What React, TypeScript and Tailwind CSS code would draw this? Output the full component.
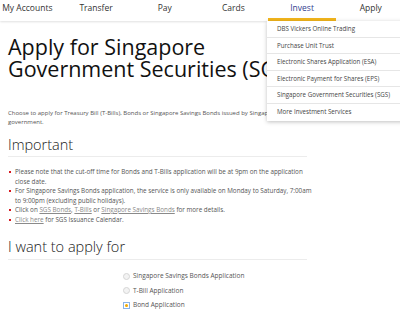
import React from "react";

const navItems = ["My Accounts", "Transfer", "Pay", "Cards", "Invest", "Apply"];

const investMenu = [
  "DBS Vickers Online Trading",
  "Purchase Unit Trust",
  "Electronic Shares Application (ESA)",
  "Electronic Payment for Shares (EPS)",
  "Singapore Government Securities (SGS)",
  "More Investment Services",
];

function Link({ children }: { children: React.ReactNode }) {
  return <span className="text-[#8a8a8a] underline">{children}</span>;
}

function Bullet({ children }: { children: React.ReactNode }) {
  return (
    <li className="relative pl-[7px]">
      <span className="absolute left-[1px] top-[4px] h-[2px] w-[2px] bg-[#d71920]" />
      {children}
    </li>
  );
}

export default function App() {
  return (
    <div
      className="relative h-[314px] w-[400px] overflow-hidden bg-white text-[#333]"
      style={{ fontFamily: '"Open Sans", "Liberation Sans", sans-serif' }}
    >
      {/* top nav */}
      <div className="relative z-10 h-[21px] bg-white shadow-[0_1px_2px_rgba(0,0,0,0.12)]">
        <div className="-ml-[7px] flex">
          {navItems.map((item) => (
            <div
              key={item}
              className={`h-[21px] w-[68.7px] shrink-0 border-b-[3px] pt-[2px] text-center text-[8.5px] leading-[11px] ${
                item === "Invest"
                  ? "border-[#f2b51c] text-[#33408f]"
                  : "border-transparent text-[#333]"
              }`}
            >
              {item}
            </div>
          ))}
        </div>
      </div>

      {/* invest dropdown */}
      <div className="absolute left-[267px] top-[21px] z-20 w-[150px] bg-white shadow-[0_1px_4px_rgba(0,0,0,0.25)]">
        {investMenu.map((m, i) => (
          <div
            key={m}
            className={`h-[16.6px] pl-[10px] text-[6.2px] leading-[16.6px] text-[#444] ${
              i < investMenu.length - 1 ? "border-b border-[#e6e6e6]" : ""
            }`}
          >
            {m}
          </div>
        ))}
      </div>

      {/* page content */}
      <div className="w-[307px] pl-[8px]">
        <h1 className="mt-[15px] whitespace-nowrap text-[21.5px] leading-[22px] text-[#111]">
          Apply for Singapore
          <br />
          Government Securities (SGS)
        </h1>

        <p className="mt-[29px] whitespace-nowrap text-[6px] leading-[8.5px] text-[#555]">
          Choose to apply for Treasury Bill (T-Bills), Bonds or Singapore Savings Bonds issued by Singapore
          <br />
          government.
        </p>

        <h2 className="mt-[9px] border-b border-[#ececec] pb-[1px] text-[14.5px] font-light leading-[20px] text-[#222]">
          Important
        </h2>

        <ul className="mt-[10px] whitespace-nowrap text-[6.3px] leading-[9.5px] text-[#555]">
          <Bullet>
            Please note that the cut-off time for Bonds and T-Bills application will be at 9pm on the application
            <br />
            close date.
          </Bullet>
          <Bullet>
            For Singapore Savings Bonds application, the service is only available on Monday to Saturday, 7:00am
            <br />
            to 9:00pm (excluding public holidays).
          </Bullet>
          <Bullet>
            Click on <Link>SGS Bonds</Link>, <Link>T-Bills</Link> or <Link>Singapore Savings Bonds</Link> for more
            details.
          </Bullet>
          <Bullet>
            <Link>Click here</Link> for SGS Issuance Calendar.
          </Bullet>
        </ul>

        <h2 className="mt-[13px] border-b border-[#ececec] pb-[2px] text-[14.5px] font-light leading-[20px] text-[#222]">
          I want to apply for
        </h2>

        <div className="ml-[115px] mt-[11px] flex flex-col gap-[4.5px] text-[6.5px] leading-[10px] text-[#555]">
          <label className="flex items-center gap-[3px]">
            <span className="h-[7px] w-[7px] shrink-0 rounded-full border border-[#d5d5d5] bg-[#f3f3f3]" />
            Singapore Savings Bonds Application
          </label>
          <label className="flex items-center gap-[3px]">
            <span className="h-[7px] w-[7px] shrink-0 rounded-full border border-[#d5d5d5] bg-[#f3f3f3]" />
            T-Bill Application
          </label>
          <label className="flex items-center gap-[3px]">
            <span className="flex h-[7px] w-[7px] shrink-0 items-center justify-center border border-[#8ab4e8] bg-white">
              <span className="h-[3px] w-[3px] rounded-full bg-[#f2a900]" />
            </span>
            Bond Application
          </label>
        </div>
      </div>
    </div>
  );
}
